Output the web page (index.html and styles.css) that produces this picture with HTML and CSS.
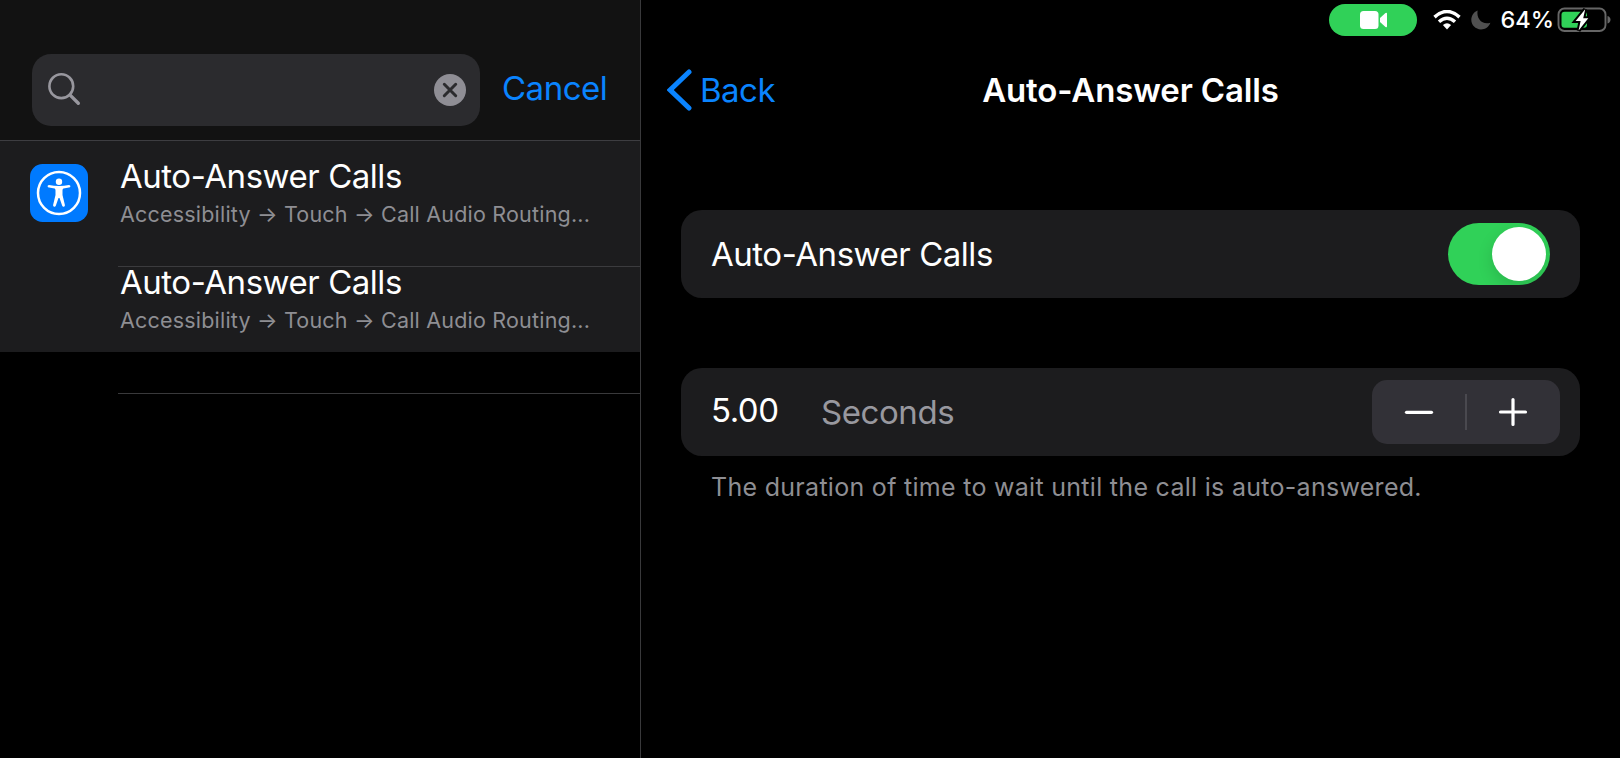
FILE: index.html
```html
<!DOCTYPE html>
<html lang="en">
<head>
<meta charset="utf-8">
<title>Settings</title>
<link rel="stylesheet" href="styles.css">
</head>
<body>
<div class="app">
  <aside class="sidebar">
    <header class="search-header">
      <div class="search-field">
        <svg class="search-icon" width="34" height="34" viewBox="0 0 34 34"><circle cx="14.3" cy="13.2" r="11.900" /><path d="M22.900 21.900L31.300 30.200" stroke-width="3.400" /></svg>
        <svg width="32" height="32" viewBox="0 0 32 32"><circle cx="16" cy="16" r="16" fill="#8f8e95"/><path d="M10.3 10.3L21.7 21.7M21.7 10.3L10.3 21.7" stroke="#2b2b2e" stroke-width="3" stroke-linecap="round"/></svg>
      </div>
      <span class="cancel">Cancel</span>
    </header>
    <div class="results">
      <div class="result first">
        <svg class="result-icon" width="58" height="58" viewBox="0 0 58 58"><rect width="58" height="58" rx="12.5" fill="#007aff"/><circle cx="29" cy="29" r="21" fill="none" stroke="#fff" stroke-width="2.5"/><circle cx="29" cy="17.8" r="3.200" fill="#fff"/><path d="M19 20.9Q29 23.200 39 20.9Q40.600 20.900 40.400 22.400Q40.200 23.300 39 23.500L33.400 24.600Q32.500 25 32.500 26.300V31L34.900 41Q35.100 42.400 34 42.700Q32.700 43 32.200 41.700L29.500 34H28.500L25.800 41.700Q25.300 43 24 42.700Q22.900 42.400 23.100 41L25.500 31V26.300Q25.500 25 24.600 24.600L19 23.500Q17.800 23.300 17.600 22.400Q17.400 20.900 19 20.900Z" fill="#fff"/></svg>
        <div class="result-text"><div class="row-title">Auto-Answer Calls</div><div class="path">Accessibility → Touch → Call Audio Routing...</div></div>
      </div>
      <div class="result second">
        <div class="result-text"><div class="row-title">Auto-Answer Calls</div><div class="path">Accessibility → Touch → Call Audio Routing...</div></div>
      </div>
    </div>
    <div class="empty-row"></div>
  </aside>
  <main class="detail">
    <div class="status-bar">
      <div class="camera-pill"><svg width="28" height="18" viewBox="0 0 28 18" fill="#fff"><rect width="18.500" height="18" rx="3.500"/><path d="M20 7L25.500 2Q27 1 27 2.800V15.200Q27 17 25.500 16L20 11Z"/></svg></div>
      <svg class="wifi" width="28" height="20" viewBox="0 0 28 20"><path d="M1.500 7.100Q14-4.100 26.500 7.100" /><path d="M6 11.700Q14 4.700 22 11.700"/><path class="dot" d="M9.900 15Q14 11.400 18.100 15L14 19.500Z"/></svg>
      <svg class="moon" width="20" height="20" viewBox="0 0 20 20"><path d="M6.600.4C2.700 2 .3 5.600.3 9.800C.3 15.200 4.600 19.400 10 19.400C14.200 19.400 17.900 16.900 19.400 12.700C11.500 15.300 5.100 8.700 6.600.4Z" fill="#505050"/></svg>
      <span class="percent">64%</span>
      <svg class="battery" width="54" height="26" viewBox="0 0 54 26"><rect x="1.500" y="1.500" width="47" height="22.500" rx="6" fill="none" stroke="#666" stroke-width="1.900"/><path d="M50.500 9Q53.500 10 53.500 12.700T50.500 16.500Z" fill="#666"/><rect x="4.500" y="4.800" width="25.500" height="16" rx="3" fill="#30d158"/><path d="M28.200 2.200L18.600 14H23.600L21.600 23.600L31.300 11.200H26.200Z" fill="#fff" stroke="#000" stroke-width="4" paint-order="stroke"/></svg>
    </div>
    <nav class="nav-bar">
      <div class="back"><svg width="25" height="42" viewBox="0 0 25 42"><path d="M22 3L3.200 21L22 39" fill="none" stroke="#0a84ff" stroke-width="5" stroke-linecap="round" stroke-linejoin="miter"/></svg><span class="back-label">Back</span></div>
      <h1 class="nav-title">Auto-Answer Calls</h1>
    </nav>
    <section class="card">
      <span class="row-title">Auto-Answer Calls</span>
      <div class="toggle"><div class="knob"></div></div>
    </section>
    <section class="card duration">
      <span class="value">5.00</span>
      <span class="unit">Seconds</span>
      <div class="stepper">
        <svg width="93" height="64" viewBox="0 0 93 64"><path d="M34.500 32.300H59.500"/></svg>
        <div class="separator"></div>
        <svg width="93" height="64" viewBox="0 0 93 64"><path d="M33.500 32H58.500M46 19.500V44.500"/></svg>
      </div>
    </section>
    <p class="footnote">The duration of time to wait until the call is auto-answered.</p>
  </main>
</div>
</body>
</html>
```
FILE: styles.css
```css
* { box-sizing: border-box; }
body { margin: 0; background: #000; color: #fff; font-family: Inter, "Liberation Sans", sans-serif; white-space: nowrap; }
svg { display: block; flex: none; }
.app { display: grid; grid-template-columns: 641px 979px; width: 1620px; height: 758px; overflow: hidden; }
.sidebar { border-right: 1px solid #39393b; }
.search-header { display: flex; align-items: flex-start; height: 141px; padding: 54px 0 0 32px; background: #121212; border-bottom: 1px solid #3d3d41; }
.search-field { display: flex; align-items: center; justify-content: space-between; width: 448px; height: 72px; padding: 0 14px 0 15px; border-radius: 19px; background: #2b2b2e; }
.search-icon { fill: none; stroke: #98979e; stroke-width: 2.6; stroke-linecap: round; }
.cancel { margin-left: 22px; font-size: 33px; line-height: 68px; letter-spacing: -0.5px; color: #0a84ff; }
.results { height: 211px; background: #1c1c1e; }
.result { display: flex; }
.first { height: 125px; padding: 15px 0 0 30px; }
.result-icon { margin: 8px 32px 0 0; }
.second { margin-left: 118px; padding: 0 0 0 2px; border-top: 1px solid #3b3b3e; }
.second .result-text { margin-top: -5px; }
.row-title { font-size: 33px; line-height: 40px; letter-spacing: -0.46px; }
.path { font-size: 21.5px; line-height: 36px; letter-spacing: 0.2px; color: #8e8e93; }
.empty-row { height: 42px; margin-left: 118px; border-bottom: 1px solid #39393b; }
.status-bar { display: flex; height: 40px; padding: 4px 0 0 688px; }
.camera-pill { display: flex; align-items: center; justify-content: center; width: 88px; height: 32px; padding-left: 2px; border-radius: 16px; background: #30d158; }
.wifi { margin: 6px 10px 0 16px; fill: none; stroke: #fff; stroke-width: 3.5; }
.wifi .dot { fill: #fff; stroke: none; }
.moon { margin-top: 6px; }
.percent { width: 57px; padding-left: 9.5px; font-size: 23.5px; font-weight: 500; line-height: 31px; }
.battery { margin: 3px 0 0 9px; }
.nav-bar { display: grid; grid-template-columns: 1fr auto 1fr; align-items: center; height: 100px; }
.back { display: flex; align-items: center; padding-left: 26px; }
.back-label { margin-left: 8px; font-size: 33px; letter-spacing: -0.5px; color: #0a84ff; }
.nav-title { margin: 0; font-size: 33px; font-weight: 600; line-height: 40px; letter-spacing: -0.14px; }
.card { display: flex; align-items: center; justify-content: space-between; width: 899px; height: 88px; margin: 70px 0 0 40px; padding: 0 30px; border-radius: 21px; background: #1c1c1e; }
.toggle { width: 102px; height: 62px; padding: 4px; border-radius: 31px; background: #30d158; overflow: hidden; }
.knob { width: 54px; height: 54px; margin-left: 40px; border-radius: 50%; background: #fff; box-shadow: 0 6px 16px #0002; }
.duration { justify-content: flex-start; padding-right: 20px; }
.value { width: 110px; margin-top: -4px; font-size: 33px; letter-spacing: -0.5px; }
.unit { font-size: 33px; letter-spacing: -0.42px; color: #98989f; }
.stepper { display: flex; align-items: center; width: 188px; margin-left: auto; border-radius: 15px; background: #323137; }
.stepper svg { fill: none; stroke: #fff; stroke-width: 3.2; stroke-linecap: round; }
.separator { width: 2px; height: 36px; background: #4a494f; }
.footnote { margin: 13px 0 0 70px; font-size: 25px; line-height: 36px; letter-spacing: 0.29px; color: #8e8e93; }
```
